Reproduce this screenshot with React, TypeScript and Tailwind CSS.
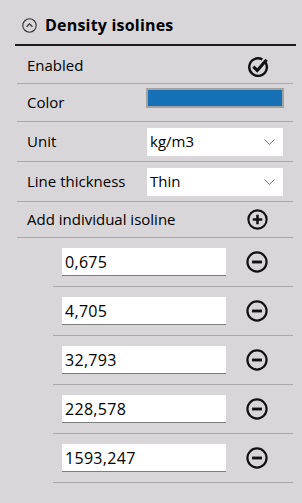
import React from "react";

const font = { fontFamily: "'Open Sans', 'Noto Sans', sans-serif" };

function CheckIcon() {
  return (
    <svg width="22" height="22" viewBox="0 0 20 20" fill="none">
      <path d="M16.5 6.3 A8 8 0 1 1 14 4.07" stroke="#111" strokeWidth="2.2" />
      <path d="M5.8 10.6 L9.3 14 L17.8 4.3" stroke="#111" strokeWidth="2.8" strokeLinejoin="miter" />
    </svg>
  );
}

function PlusIcon() {
  return (
    <svg width="21" height="21" viewBox="0 0 20 20" fill="none">
      <circle cx="10" cy="10" r="8.7" stroke="#111" strokeWidth="2" />
      <path d="M5.5 10 H14.5 M10 5.5 V14.5" stroke="#111" strokeWidth="2.4" />
    </svg>
  );
}

function MinusIcon() {
  return (
    <svg width="22" height="22" viewBox="0 0 20 20" fill="none">
      <circle cx="10" cy="10" r="8.7" stroke="#111" strokeWidth="2" />
      <path d="M5.5 10 H14.5" stroke="#111" strokeWidth="2.6" />
    </svg>
  );
}

function ChevronDown() {
  return (
    <svg width="11" height="6" viewBox="0 0 11 6" fill="none">
      <path d="M0.5 0.5 L5.5 5.3 L10.5 0.5" stroke="#707070" strokeWidth="1" />
    </svg>
  );
}

function HeaderIcon() {
  return (
    <svg width="15" height="15" viewBox="0 0 15 15" fill="none">
      <circle cx="7.5" cy="7.5" r="6.7" stroke="#333" strokeWidth="1.1" />
      <path d="M4.6 8.8 L7.5 5.9 L10.4 8.8" stroke="#333" strokeWidth="1.3" />
    </svg>
  );
}

function Select({ value }: { value: string }) {
  return (
    <div className="w-[136px] h-[28px] bg-white flex items-center justify-between pl-[3px] pr-[8px]">
      <span className="text-[15px] text-black">{value}</span>
      <ChevronDown />
    </div>
  );
}

const values = ["0,675", "4,705", "32,793", "228,578", "1593,247"];

export default function App() {
  return (
    <div className="w-[302px] h-[503px] bg-[#d8d6d9] text-black" style={font}>
      <div className="h-[44px] flex items-center pl-[22px] pt-[6px] gap-[8px]">
        <HeaderIcon />
        <span className="text-[16px] font-bold tracking-[0.2px]">Density isolines</span>
      </div>
      <div className="ml-[15px] mr-[6px] h-[2px] bg-[#1a1a1a]" />
      <div className="ml-[17px] mr-[9px]">
        <div className="h-[38px] border-b border-[#a9a9a9] flex items-center justify-between pl-[10px] pr-[24px] pt-[2px]">
          <span className="text-[15px]">Enabled</span>
          <CheckIcon />
        </div>
        <div className="h-[38px] border-b border-[#a9a9a9] flex items-center pl-[10px] relative">
          <span className="text-[15px] w-[119px]">Color</span>
          <div className="self-start mt-[4px] w-[138px] h-[20px] border-2 border-[#a2a2a2] bg-[#1570b5]" />
        </div>
        <div className="h-[40px] border-b border-[#a9a9a9] flex items-center pl-[10px]">
          <span className="text-[15px] w-[120px]">Unit</span>
          <Select value="kg/m3" />
        </div>
        <div className="h-[40px] border-b border-[#a9a9a9] flex items-center pl-[10px]">
          <span className="text-[15px] w-[120px]">Line thickness</span>
          <Select value="Thin" />
        </div>
        <div className="h-[36px] border-b border-[#a9a9a9] flex items-center justify-between pl-[10px] pr-[25px]">
          <span className="text-[15px]">Add individual isoline</span>
          <PlusIcon />
        </div>
        <div className="ml-[36px]">
          {values.map((v) => (
            <div key={v} className="h-[49px] border-b border-[#a9a9a9] flex items-center pl-[9px]">
              <div className="w-[164px] h-[28px] bg-white border-b border-[#7c7c7c] flex items-center pl-[3px]">
                <span className="text-[16px] tracking-[0.3px]">{v}</span>
              </div>
              <div className="ml-[20px]">
                <MinusIcon />
              </div>
            </div>
          ))}
        </div>
      </div>
    </div>
  );
}
